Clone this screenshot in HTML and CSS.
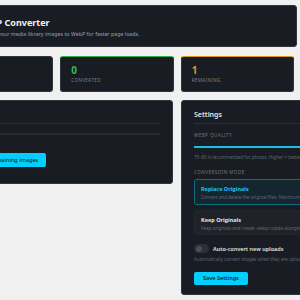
FILE: index.html
```html
<!DOCTYPE html>
<html lang="en">
<head>
    <meta charset="UTF-8">
    <meta name="viewport" content="width=device-width, initial-scale=1.0">
    <title>WebP Converter</title>
    <link rel="stylesheet" href="styles.css">
</head>
<body>
    <div class="wrap">
        <div class="header card">
            <svg class="logo" width="18" height="18" viewBox="0 0 18 18">
                <rect x="1" y="1" width="16" height="16" rx="3" fill="#00c8f0"/>
            </svg>
            <div>
                <h1>WebP Converter</h1>
                <p class="sub">Convert your media library images to WebP for faster page loads.</p>
            </div>
        </div>

        <div class="stats">
            <div class="stat card">
                <div class="num">1</div>
                <div class="label">Total images</div>
            </div>
            <div class="stat card green">
                <div class="num">0</div>
                <div class="label">Converted</div>
            </div>
            <div class="stat card orange">
                <div class="num">1</div>
                <div class="label">Remaining</div>
            </div>
        </div>

        <div class="columns">
            <div class="panel card">
                <div class="panel-head">Bulk</div>
                <div class="panel-body">
                    <div class="track"></div>
                    <button class="btn">Convert all remaining images</button>
                </div>
            </div>

            <div class="panel card settings">
                <div class="panel-head">Settings</div>
                <div class="panel-body">
                    <div class="field-label">WebP Quality</div>
                    <div class="slider"></div>
                    <p class="hint">75–80 is recommended for photos. Higher = better quality, larger files.</p>

                    <div class="field-label mode">Conversion Mode</div>
                    <div class="option active">
                        <div class="opt-title">Replace Originals</div>
                        <div class="opt-desc">Convert and delete the original files. Maximum space savings.</div>
                    </div>
                    <div class="option">
                        <div class="opt-title">Keep Originals</div>
                        <div class="opt-desc">Keep originals and create .webp copies alongside them.</div>
                    </div>

                    <div class="toggle-row">
                        <span class="toggle"><span class="knob"></span></span>
                        <span class="toggle-text">Auto-convert new uploads</span>
                    </div>
                    <p class="hint">Automatically convert images when they are uploaded to the library.</p>

                    <button class="btn save">Save Settings</button>
                </div>
            </div>
        </div>
    </div>
</body>
</html>
```

FILE: styles.css
```css
body {
    margin: 0;
    background-color: #f0f0f1;
    font-family: "Noto Sans", "Open Sans", sans-serif;
    overflow: hidden;
    height: 300px;
}
.wrap {
    margin-left: -60px;
    width: 357px;
    padding-top: 5px;
}
.card {
    background-color: #191c22;
    border: 1px solid #30343b;
    border-radius: 3px;
    box-sizing: border-box;
}
.header {
    height: 42px;
    display: flex;
    align-items: center;
    gap: 6px;
    padding: 3px 12px 0;
}
h1 {
    margin: 0;
    color: #f2f2f2;
    font-size: 9px;
    line-height: 12px;
    font-weight: 700;
}
.sub {
    margin: 2px 0 0;
    color: #9aa0a8;
    font-size: 5.3px;
    line-height: 7px;
}
.stats {
    display: grid;
    grid-template-columns: repeat(3, 1fr);
    gap: 7px;
    margin: 9px 3px 0 0;
}
.stat {
    height: 36px;
    padding: 8px 10px 0;
    border-top-width: 1.5px;
}
.green {
    border-top-color: #28b446;
}
.orange {
    border-top-color: #d4991c;
}
.num {
    font-size: 10px;
    line-height: 11px;
    font-weight: 700;
    color: #e5e7eb;
}
.green .num {
    color: #2fbf4f;
}
.orange .num {
    color: #d99a1e;
}
.label {
    margin-top: 1px;
    font-size: 4.5px;
    line-height: 6px;
    letter-spacing: 0.4px;
    text-transform: uppercase;
    color: #7a808a;
}
.columns {
    display: grid;
    grid-template-columns: 233px 150px;
    gap: 8px;
    margin-top: 8px;
    align-items: start;
}
.panel {
    padding: 0 12px;
}
.panel-head {
    padding: 9px 0 3px;
    line-height: 10px;
    font-size: 7px;
    font-weight: 600;
    color: #e8e8e8;
    border-bottom: 1px solid #2a2e35;
}
.track {
    height: 2px;
    margin-top: 9px;
    background-color: #252a31;
}
.btn {
    display: block;
    border: none;
    border-radius: 2px;
    background-color: #00cfff;
    color: #0b1e26;
    font-family: inherit;
    font-size: 5.5px;
    font-weight: 500;
    height: 13.5px;
    padding: 0 8px;
    cursor: pointer;
}
.panel .btn {
    margin: 18px 0 16px;
}
.field-label {
    margin-top: 8px;
    font-size: 4.5px;
    line-height: 7px;
    letter-spacing: 0.5px;
    text-transform: uppercase;
    color: #737a84;
}
.field-label.mode {
    margin-top: 8px;
}
.slider {
    height: 1.5px;
    margin-top: 7px;
    background-color: #1cbde0;
}
.hint {
    margin: 6px 0 0;
    font-size: 4.5px;
    line-height: 7px;
    color: #5f6670;
    white-space: nowrap;
}
.option {
    margin-top: 5px;
    height: 25px;
    box-sizing: border-box;
    padding: 5px 6px 0;
    border: 1px solid #22262d;
    border-radius: 3px;
    background-color: #1f2329;
    white-space: nowrap;
}
.option.active {
    margin-top: 3.5px;
    height: 26px;
    background-color: #142630;
    border-color: #0f6d82;
}
.opt-title {
    font-size: 5.5px;
    line-height: 8px;
    font-weight: 700;
    color: #e3e3e3;
}
.active .opt-title {
    color: #22c3f0;
}
.opt-desc {
    margin-top: 1px;
    font-size: 4.5px;
    line-height: 7px;
    color: #5f6670;
}
.toggle-row {
    display: flex;
    align-items: center;
    gap: 4px;
    margin-top: 9px;
}
.toggle {
    display: inline-block;
    position: relative;
    width: 15px;
    height: 9px;
    border-radius: 5px;
    background-color: #2b2f36;
}
.knob {
    position: absolute;
    left: 1.5px;
    top: 1.5px;
    width: 6px;
    height: 6px;
    border-radius: 50%;
    background-color: #4a4f57;
}
.toggle-text {
    font-size: 5.5px;
    font-weight: 600;
    color: #e3e3e3;
}
.toggle-row + .hint {
    margin-top: 3px;
}
.btn.save {
    margin: 8.5px 0 9px;
    padding: 0 9px;
    height: 13px;
    font-weight: 600;
}
```
